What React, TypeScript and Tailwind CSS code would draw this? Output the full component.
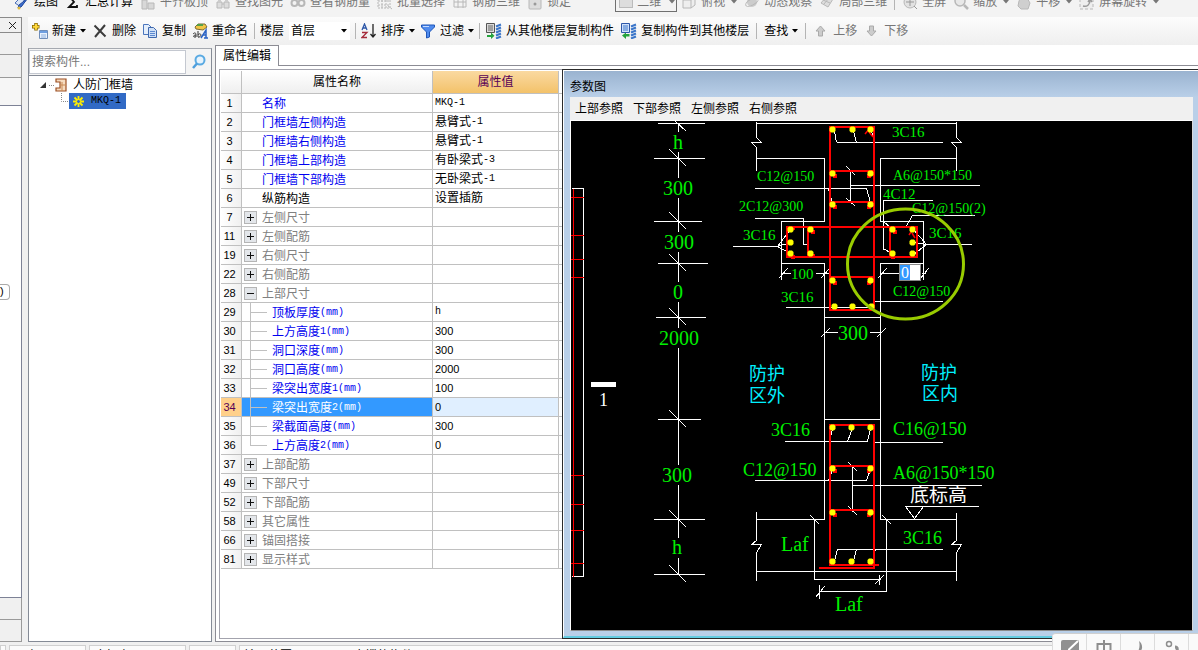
import React from "react";

const CJK = 'font-["Liberation_Sans","Noto_Sans_CJK_SC",sans-serif]';

/* ---------- small helpers ---------- */

function Mixed({ text }: { text: string }) {
  const parts = text.split(/([\x20-\x7e]+)/).filter(Boolean);
  return (
    <span className="flex items-center">
      {parts.map((p, i) =>
        /^[0-9]+$/.test(p) ? (
          <span key={i} className="text-[11px]">{p}</span>
        ) : /^[\x20-\x7e]+$/.test(p) ? (
          <span key={i} className='font-["Liberation_Mono",monospace] text-[10px]'>{p}</span>
        ) : (
          <span key={i}>{p}</span>
        )
      )}
    </span>
  );
}

function Caret() {
  return (
    <svg width="6" height="4" viewBox="0 0 6 4" className="shrink-0">
      <path d="M0 0h6L3 3.5z" fill="currentColor" />
    </svg>
  );
}

function Sep() {
  return <span className="h-4 w-px shrink-0 bg-[#b4b4b4]" />;
}

function Ico({ children }: { children: React.ReactNode }) {
  return (
    <svg width="16" height="16" viewBox="0 0 16 16" className="shrink-0" fill="none">
      {children}
    </svg>
  );
}

type ToolProps = { icon: React.ReactNode; label: string; caret?: boolean; dim?: boolean };

function Tool({ icon, label, caret, dim }: ToolProps) {
  return (
    <button
      type="button"
      className={`flex shrink-0 items-center gap-1 whitespace-nowrap leading-4 ${dim ? "text-[#777]" : "text-black"}`}
    >
      <Ico>{icon}</Ico>
      <span className={dim && caret ? "mr-[2px]" : ""}>{label}</span>
      {caret && <Caret />}
    </button>
  );
}

/* ---------- icons ---------- */

const G = "#b8b8b8";
const icons = {
  draw: (
    <>
      <path d="M1 9l5-5 5 3-4 6z" fill="#dbe6f7" stroke="#4a6db5" />
      <path d="M14 4l-7 9-3 1 1-3z" fill="#3d6fd1" stroke="#234a9c" />
      <circle cx="5" cy="14" r="1.5" fill="#e0b93a" />
    </>
  ),
  sum: <path d="M12 4V2H4l5 6-5 5h8v-2" stroke="#111" strokeWidth="1.8" />,
  align: (
    <>
      <path d="M2 6h5v9H2zM8 9h6v6H8z" fill="#d8d8d8" stroke={G} />
      <path d="M3 3h10" stroke={G} />
    </>
  ),
  find: (
    <>
      <path d="M2 8h5v6H2zM9 8h5v6H9zM7 10h2" fill="#ddd" stroke={G} />
      <path d="M3 4h3v4H3zM10 4h3v4h-3z" fill="#ccc" />
    </>
  ),
  view: (
    <>
      <circle cx="4.500" cy="9" r="3" stroke={G} strokeWidth="2" />
      <circle cx="11.500" cy="9" r="3" stroke={G} strokeWidth="2" />
    </>
  ),
  batch: <path d="M1 3h12v11H1zM1 7h12M1 11h12M5 3v11M9 3v11M11 12l4 3" stroke={G} strokeDasharray="2 1" />,
  grid: <path d="M2 4h12v9H2zM2 8h12M6 3v11M11 3v11" stroke={G} />,
  lock: (
    <>
      <rect x="2" y="5" width="12" height="10" rx="1" fill="#ddd" stroke={G} />
      <path d="M5 5V3a3 3 0 016 0v2" stroke={G} />
      <circle cx="8" cy="10" r="1.500" fill="#999" />
    </>
  ),
  cube: <path d="M2 6l4-3h8v8l-4 3H2zM2 6h8v8M10 6l4-3" fill="#eee" stroke={G} />,
  orbit: (
    <>
      <circle cx="8" cy="8" r="5" fill="#ccc" />
      <ellipse cx="8" cy="8" rx="7" ry="3" stroke={G} transform="rotate(-30 8 8)" />
    </>
  ),
  part3d: <path d="M2 9l5-6 7 2-5 8zM5 10l5-6M4 6l7 3" fill="#ddd" stroke={G} />,
  full: (
    <>
      <circle cx="8" cy="8" r="6" fill="#e2e2e2" stroke={G} />
      <path d="M8 4v8M4 8h8M12 12l3 3" stroke="#999" />
    </>
  ),
  zoom: (
    <>
      <circle cx="7" cy="7" r="5" fill="#e8e8e8" stroke={G} strokeWidth="1.5" />
      <path d="M11 11l4 4" stroke={G} strokeWidth="2.5" />
    </>
  ),
  pan: <path d="M3 7l2-4 6 1 3 5-2 6H5l-3-3z" fill="#cfcfcf" stroke={G} />,
  rotate: (
    <>
      <path d="M1 3h13v12H1z" fill="#eee" stroke={G} strokeDasharray="3 2" />
      <path d="M4 12c4 1 7-1 7-6M9 8l2-3 2 3" stroke="#999" strokeWidth="1.5" />
    </>
  ),
  create: (
    <>
      <path d="M7.500 7.500h8v8h-8z" fill="#e8f1fd" stroke="#6f8db8" />
      <path d="M8 8h7v2H8z" fill="#6f9fe0" />
      <path d="M9 12h5M9 14h5" stroke="#8fb0dd" />
      <path d="M4 0v7.500M0 3.800h7.500" stroke="#8a6a00" strokeWidth="3.500" />
      <path d="M4 .8v6M.8 3.800h6" stroke="#ffd83a" strokeWidth="2" />
    </>
  ),
  del: <path d="M2.500 2.500l11 11M13 2L3 14" stroke="#3c3c3c" strokeWidth="2" />,
  copy: (
    <>
      <path d="M1.500 1.500h5l3 3v7h-8z" fill="#e4eefb" stroke="#4b76bd" />
      <path d="M6.500 4.500h5l3 3v7h-8z" fill="#cfe0f7" stroke="#3f68ad" />
      <path d="M8 8.500h5M8 10.500h5M8 12.500h5" stroke="#5d8ad0" />
    </>
  ),
  rename: (
    <>
      <path d="M3 4l3-3h7l2 3-4 3-7-1z" fill="#f1c544" stroke="#7d6b35" />
      <path d="M5 2h6" stroke="#55a04a" strokeWidth="2" />
      <path d="M1 11c2-2 3-1 3 1v2H2c-1-1 0-2 2-2M6 8v6M6 12c1-2 3-1 3 0s-2 3-3 2" stroke="#333" />
      <path d="M9 15l5-8v8M11 12h3M12 15h4" stroke="#2a62c4" strokeWidth="1.500" />
    </>
  ),
  sort: (
    <>
      <path d="M1 7l2.500-6L6 7M2 5h3" stroke="#2d57a8" strokeWidth="1.300" />
      <path d="M1 9.500h5l-5 5h5" stroke="#a52a3a" strokeWidth="1.300" />
      <path d="M12 1v12M9.500 11l2.500 3 2.500-3" stroke="#222" strokeWidth="1.300" />
    </>
  ),
  filter: (
    <>
      <path d="M1.500 2h13v2L9.500 9v5l-3 1V9l-5-5z" fill="#4f8bee" stroke="#1f56b8" />
      <path d="M3 3.500h6" stroke="#c6dcff" />
    </>
  ),
  floorFrom: (
    <>
      <path d="M.5.500h8v9h-8z" fill="#d9d9d9" stroke="#555" />
      <path d="M2 3h5M2 5h5M2 7h5" stroke="#666" />
      <path d="M1 12h4v-2.500l3.500 3.300L5 16v-2H1z" fill="#25a33c" />
      <path d="M10 3.500l5-2M10 6.500l5-2M10 9.500l5-2M10 12.500l5-2M10 15.500l5-2" stroke="#3c76c9" strokeWidth="2" />
    </>
  ),
  floorTo: (
    <>
      <path d="M.5.500h8v9h-8z" fill="#cfe0fa" stroke="#2d57a8" />
      <path d="M2 3h5M2 5h5M2 7h5" stroke="#3c76c9" />
      <path d="M8.500 13.500H5V16l-4-3.500L5 9.500V11h3.500z" fill="#25a33c" />
      <path d="M10 3.500l5-2M10 6.500l5-2M10 9.500l5-2M10 12.500l5-2M10 15.500l5-2" stroke="#3c76c9" strokeWidth="2" />
    </>
  ),
  up: <path d="M7.500 3L12 8H9.500v5h-4V8H3z" fill="#ccc" stroke="#aaa" />,
  down: <path d="M7.500 13L3 8h2.500V3h4v5H12z" fill="#ccc" stroke="#aaa" />,
};

/* ---------- top bars ---------- */

function ViewBar() {
  return (
    <div className="flex h-[17px] shrink-0 items-end overflow-hidden bg-[#f3f3f3]">
      <div className="flex h-[30px] shrink-0 items-center gap-[7px] pl-[14px]">
        <Tool icon={icons.draw} label="绘图" />
        <Tool icon={icons.sum} label="汇总计算" />
        <Tool icon={icons.align} label="平齐板顶" dim />
        <Tool icon={icons.find} label="查找图元" dim />
        <Tool icon={icons.view} label="查看钢筋量" dim />
        <Tool icon={icons.batch} label="批量选择" dim />
        <Tool icon={icons.grid} label="钢筋三维" dim />
        <Tool icon={icons.lock} label="锁定" dim />
      </div>
      <div className="flex h-[30px] shrink-0 items-center gap-1 pl-11">
        <button type="button" className="flex h-5 w-[62px] shrink-0 items-center gap-1 border border-[#707070] pl-[3px] text-[#777]">
          <svg width="14" height="12" className="shrink-0">
            <rect x="0.5" y="0.5" width="13" height="11" fill="#ddd" stroke="#bbb" />
          </svg>
          <span className="mr-1">二维</span>
          <Caret />
        </button>
        <div className="flex shrink-0 items-center gap-[7px]">
          <Tool icon={icons.cube} label="俯视" caret dim />
          <Tool icon={icons.orbit} label="动态观察" dim />
          <Tool icon={icons.part3d} label="局部三维" dim />
          <Sep />
          <Tool icon={icons.full} label="全屏" dim />
          <Tool icon={icons.zoom} label="缩放" caret dim />
          <Tool icon={icons.pan} label="平移" caret dim />
          <Tool icon={icons.rotate} label="屏幕旋转" caret dim />
        </div>
      </div>
    </div>
  );
}

function EditBar() {
  return (
    <div className="flex h-7 shrink-0 items-center gap-[6px] overflow-hidden bg-gradient-to-b from-[#fcfcfc] to-[#efefef] pl-1">
      <div className="flex shrink-0 items-center gap-[6px]">
        <Tool icon={icons.create} label="新建" caret />
        <Tool icon={icons.del} label="删除" />
        <Tool icon={icons.copy} label="复制" />
        <Tool icon={icons.rename} label="重命名" />
      </div>
      <div className="flex shrink-0 items-center gap-[5px]">
        <Sep />
        <label htmlFor="floor" className="shrink-0">楼层</label>
        <div className="relative flex shrink-0 items-center">
          <select id="floor" defaultValue="首层" className="h-[18px] w-[61px] appearance-none bg-white pl-[2px] text-xs leading-4 text-black outline-none">
            <option>首层</option>
          </select>
          <span className="pointer-events-none absolute right-[3px]">
            <Caret />
          </span>
        </div>
        <Sep />
        <Tool icon={icons.sort} label="排序" caret />
        <Tool icon={icons.filter} label="过滤" caret />
        <Sep />
      </div>
      <div className="flex shrink-0 items-center gap-[7px]">
        <Tool icon={icons.floorFrom} label="从其他楼层复制构件" />
        <Tool icon={icons.floorTo} label="复制构件到其他楼层" />
        <Sep />
        <button type="button" className="flex shrink-0 items-center gap-1">
          <span>查找</span>
          <Caret />
        </button>
        <Sep />
        <Tool icon={icons.up} label="上移" dim />
        <Tool icon={icons.down} label="下移" dim />
      </div>
    </div>
  );
}

/* ---------- left side ---------- */

function Dock() {
  const cell = "border-b border-r border-[#9a9a9a] bg-[#f0f0f0]";
  return (
    <aside className="flex w-[22px] shrink-0 flex-col">
      <div className="flex h-4 items-center justify-end border border-l-0 border-[#8a8a8a] pr-1">
        <button type="button" aria-label="关闭">
          <svg width="9" height="9" viewBox="0 0 9 9">
            <path d="M1 1l7 7M8 1L1 8" stroke="#222" />
          </svg>
        </button>
      </div>
      <div className={`h-[22px] ${cell}`} />
      <div className={`h-[23px] ${cell}`} />
      <div className="h-[27px] border-r border-[#9a9a9a] bg-[#f6f6f6]" />
      <div className="flex flex-1 items-center border border-l-0 border-[#7d8296] bg-white">
        <div className="mb-[120px] h-4 w-[10px] rounded-r border border-l-0 border-[#aaa] text-[11px] leading-3">)</div>
      </div>
      <div className={`h-[22px] ${cell}`} />
      <div className={`h-[22px] ${cell}`} />
    </aside>
  );
}

function ComponentTree() {
  return (
    <section className="flex w-[184px] shrink-0 flex-col border border-[#858b96] border-t-[#a5a9b0] bg-white">
      <form className="flex h-[27px] items-center gap-[5px] border-b border-[#858b96] bg-[#f4f4f4] pr-1" onSubmit={(e) => e.preventDefault()}>
        <input
          aria-label="搜索构件"
          placeholder="搜索构件..."
          className="h-6 min-w-0 flex-1 border border-[#c4c8d0] bg-white pb-px pl-[2px] text-xs outline-none placeholder:text-[#777]"
        />
        <button type="submit" aria-label="搜索">
          <svg width="16" height="16" viewBox="0 0 16 16" fill="none">
            <circle cx="9" cy="6" r="4.5" fill="#e6f3fd" stroke="#5aaae2" strokeWidth="2" />
            <path d="M6 9.500L2 14" stroke="#4f9fdd" strokeWidth="2.500" />
          </svg>
        </button>
      </form>
      <ul className="flex-1 pt-px">
        <li>
          <div className="flex h-4 items-center gap-[6px] pl-[10px]">
            <svg width="28" height="16" viewBox="0 0 28 16" fill="none">
              <path d="M7 5v6H1z" fill="#333" />
              <path d="M10 8.500h6" stroke="#888" strokeDasharray="1 1" />
              <path d="M17 2h10v12H17v-3h4V5h-4z" fill="#f6dcc0" stroke="#9c4f22" strokeWidth="1.200" />
              <path d="M21 8h6M23 5v9" stroke="#c98a55" />
            </svg>
            <span className="text-xs leading-4">人防门框墙</span>
          </div>
          <ul>
            <li className="flex h-4 items-center pl-8">
              <svg width="8" height="16" viewBox="0 0 8 16" fill="none" className="shrink-0">
                <path d="M0.500 0v8.500H8" stroke="#888" strokeDasharray="1 1" />
              </svg>
              <div className="flex h-4 w-[57px] items-center gap-[7px] bg-[#316ac5] pl-1">
                <svg width="11" height="11" viewBox="0 0 11 11" fill="none" className="shrink-0">
                  <path d="M5.500 0v11M0 5.500h11M1.500 1.500l8 8M9.500 1.500l-8 8" stroke="#ffee00" strokeWidth="1.800" />
                  <circle cx="5.500" cy="5.500" r="2" fill="#316ac5" stroke="#ffee00" />
                </svg>
                <span className='font-["Liberation_Mono",monospace] text-[10px] leading-4 text-black'>MKQ-1</span>
              </div>
            </li>
          </ul>
        </li>
      </ul>
    </section>
  );
}

/* ---------- property table ---------- */

type Kind = "attr" | "plain" | "group" | "open" | "child" | "last";
type Row = { no: number; name: string; value?: string; kind: Kind; active?: boolean };

const rows: Row[] = [
  { no: 1, name: "名称", value: "MKQ-1", kind: "attr" },
  { no: 2, name: "门框墙左侧构造", value: "悬臂式-1", kind: "attr" },
  { no: 3, name: "门框墙右侧构造", value: "悬臂式-1", kind: "attr" },
  { no: 4, name: "门框墙上部构造", value: "有卧梁式-3", kind: "attr" },
  { no: 5, name: "门框墙下部构造", value: "无卧梁式-1", kind: "attr" },
  { no: 6, name: "纵筋构造", value: "设置插筋", kind: "plain" },
  { no: 7, name: "左侧尺寸", kind: "group" },
  { no: 11, name: "左侧配筋", kind: "group" },
  { no: 19, name: "右侧尺寸", kind: "group" },
  { no: 22, name: "右侧配筋", kind: "group" },
  { no: 28, name: "上部尺寸", kind: "open" },
  { no: 29, name: "顶板厚度(mm)", value: "h", kind: "child" },
  { no: 30, name: "上方高度1(mm)", value: "300", kind: "child" },
  { no: 31, name: "洞口深度(mm)", value: "300", kind: "child" },
  { no: 32, name: "洞口高度(mm)", value: "2000", kind: "child" },
  { no: 33, name: "梁突出宽度1(mm)", value: "100", kind: "child" },
  { no: 34, name: "梁突出宽度2(mm)", value: "0", kind: "child", active: true },
  { no: 35, name: "梁截面高度(mm)", value: "300", kind: "child" },
  { no: 36, name: "上方高度2(mm)", value: "0", kind: "last" },
  { no: 37, name: "上部配筋", kind: "group" },
  { no: 49, name: "下部尺寸", kind: "group" },
  { no: 52, name: "下部配筋", kind: "group" },
  { no: 58, name: "其它属性", kind: "group" },
  { no: 66, name: "锚固搭接", kind: "group" },
  { no: 81, name: "显示样式", kind: "group" },
];

function NameCell({ row }: { row: Row }) {
  const { kind, name, active } = row;
  if (kind === "group" || kind === "open") {
    return (
      <div className="flex h-[18px] items-center gap-[5px] pl-[2px] text-[#808080]">
        <button type="button" aria-label={name} className="h-[13px] w-[13px] shrink-0 border border-[#b5b5b5] bg-[#e3e6ea]">
          <svg width="11" height="11" viewBox="0 0 11 11">
            <path d={kind === "open" ? "M2 5.500h7" : "M2 5.500h7M5.500 2v7"} stroke="#111" />
          </svg>
        </button>
        <span className="pt-[2px]">{name}</span>
      </div>
    );
  }
  if (kind === "child" || kind === "last") {
    return (
      <div className={`flex h-[18px] items-center gap-[5px] pl-2 ${active ? "text-white" : "text-[#0000f0]"}`}>
        <span className="flex w-[17px] shrink-0 flex-col self-stretch">
          <span className="h-[10px] border-b border-l border-[#c0c0c0]" />
          <span className={kind === "last" ? "flex-1" : "-mb-px flex-1 border-l border-[#c0c0c0]"} />
        </span>
        <span className="pt-[2px]"><Mixed text={name} /></span>
      </div>
    );
  }
  return (
    <div className={`flex h-[18px] items-center pl-5 pt-[2px] ${kind === "attr" ? "text-[#0000f0]" : "text-black"}`}>{name}</div>
  );
}

function PropertyTable() {
  const line = "border-b border-r border-[#c0c0c0] p-0";
  return (
    <div className="w-[343px] shrink-0 border border-r-0 border-[#a3a3ad] bg-white pl-px pt-px">
      <table className="w-full table-fixed border-separate border-spacing-0 text-xs leading-[18px]">
        <colgroup>
          <col className="w-[21px]" />
          <col className="w-[191px]" />
          <col className="w-[126px]" />
          <col />
        </colgroup>
        <thead>
          <tr>
            <th className={`h-[23px] bg-gradient-to-b from-white to-[#efefef] ${line}`} />
            <th className={`bg-gradient-to-b from-white to-[#efefef] font-normal ${line}`}>属性名称</th>
            <th className={`bg-gradient-to-b from-[#fad9a0] to-[#f3c269] font-normal text-[#560056] ${line}`}>属性值</th>
            <th className="border-b border-[#c0c0c0] p-0" />
          </tr>
        </thead>
        <tbody>
          {rows.map((r) => (
            <tr key={r.no}>
              <td
                className={`h-[19px] pr-[3px] text-center text-[11px] ${line} ${
                  r.active ? "bg-[#ffd08a] text-[#560056]" : "bg-gradient-to-r from-white to-[#f0f0f0]"
                }`}
              >
                {r.no}
              </td>
              <td className={`${line} ${r.active ? "bg-[#3399ff]" : ""}`}>
                <NameCell row={r} />
              </td>
              <td className={line + (r.active ? " bg-[#e0efff]" : "")}>
                <div className="flex h-[18px] items-center pl-[2px]">
                  <Mixed text={r.value ?? ""} />
                </div>
              </td>
              <td className="border-b border-[#c0c0c0] p-0" />
            </tr>
          ))}
        </tbody>
      </table>
    </div>
  );
}

/* ---------- section drawing ---------- */

const whiteLines = [
  // elevation dimension chain
  "M657 123H704M653 158H704M653 221H701M657 263H707M655 317H705M657 419H700M653 519H704M653 574H704",
  "M678 123V131M678 151V177M678 197V231M678 251V281M678 301V327M678 347V464M678 484V537M678 557V574",
  // upper wall outline
  "M756 123H956M756 158H824V221H781V263H824V519H756M956 158H880V221H923V263H880V519H956",
  "M824 317H880M824 419H880",
  // lower slab and anchorage
  "M756 571H956M814 519V579H880M879 574V584M886 519V591H819M819 584V598",
  // leaders
  "M836 142H942M754 188H866M850 170V202M850 185H979M932 200H883V249M912 215H974M754 218H803V244H808M732 246H777M925 244H971",
  "M781 263V279M781 273H790M815 273H829M880 273H900M923 263V279M921 273H925M785 307H872M874 301H942",
  "M824 332H837M869 332H880M784 441H867M874 442H942M754 480H866M852 466V511M852 485H981M904 506H978M836 549H942",
  // side section
  "M571 188H583V576H571",
];

const whiteDiagonals = [
  "M675 121L686 131M669 149L686 166M669 212L686 229M669 254L686 271M669 308L686 325M669 410L686 427M669 510L686 527M669 565L686 582",
  "M756 121V137L761 142H751L756 147V170M956 121V137L961 142H951L956 147V170",
  "M756 511V540L751 544H761L756 552V580M956 512V540L951 544H961L956 552V580",
  "M834 131L836 142M853 131L856 142M871 131L874 142M828 188L832 204M866 188L870 202",
  "M846 166L855 175M846 198L855 206M883 221L891 228M883 248L891 253M912 215L905 227",
  "M777 246L790 229M777 246L790 242M777 246L790 253M926 244L913 229M926 244L913 242M926 244L913 254",
  "M778 278L787 268M820 278L829 268M877 278L886 268M919 279L928 268M820 337L829 328M876 337L885 328",
  "M829 441L832 428M847 441L852 428M867 441L870 428M828 480L832 469M866 480L870 469M848 462L857 471M848 506L857 515",
  "M905 506L914 518L923 506M810 515L819 524M882 515L891 524M874 584L883 575M815 597L824 586",
  "M834 560L837 549M853 560L856 549M872 560L875 549",
];

const dots: [number, number][] = [
  [832, 129], [852, 129], [870, 129], [832, 173], [870, 173], [832, 204], [870, 204],
  [790, 229], [790, 242], [790, 253], [810, 229], [810, 253],
  [892, 229], [892, 253], [912, 229], [912, 242], [912, 253],
  [832, 280], [870, 280], [834, 306], [852, 306], [871, 306],
  [832, 427], [851, 427], [870, 427], [832, 468], [870, 468], [832, 512], [870, 512],
  [832, 561], [851, 561], [870, 561],
];

const hooks: [number, number][] = [
  [834, 175], [868, 175], [834, 206], [868, 206], [812, 231], [812, 255], [894, 231], [892, 256],
  [834, 282], [868, 282], [834, 470], [868, 470], [834, 514], [868, 514], [792, 256], [792, 227],
];

type Label = [number, number, string];
const rebarLabels: Label[] = [
  [757, 181, "C12@150"], [893, 180, "A6@150*150"], [912, 213, "C12@150(2)"], [739, 211, "2C12@300"], [893, 296, "C12@150"],
];
const barLabels: Label[] = [
  [892, 137, "3C16"], [883, 199, "4C12"], [743, 240, "3C16"], [929, 238, "3C16"], [781, 302, "3C16"], [791, 279, "100"],
];
const bigLabels: Label[] = [
  [771, 436, "3C16"], [893, 435, "C16@150"], [743, 476, "C12@150"], [893, 479, "A6@150*150"], [903, 544, "3C16"],
];
const dimLabels: Label[] = [
  [673, 149, "h"], [663, 195, "300"], [664, 249, "300"], [673, 299, "0"], [659, 345, "2000"], [662, 482, "300"],
  [672, 554, "h"], [838, 340, "300"], [781, 551, "Laf"], [835, 611, "Laf"],
];
const zoneLabels: Label[] = [
  [749, 380, "防护"], [749, 402, "区外"], [921, 379, "防护"], [922, 400, "区内"],
];

function Labels({ items, className }: { items: Label[]; className: string }) {
  return (
    <g className={className}>
      {items.map(([x, y, t]) => (
        <text key={`${x}-${y}`} x={x} y={y}>{t}</text>
      ))}
    </g>
  );
}

function SectionDrawing() {
  return (
    <svg width="621" height="509" viewBox="571 121 621 509" className="block shrink-0" fill="none" role="img" aria-label="参数图">
      <g transform="translate(.5 .5)" stroke="#fff" shapeRendering="crispEdges">
        {whiteLines.map((d) => <path key={d} d={d} />)}
        {whiteDiagonals.map((d) => <path key={d} d={d} />)}
      </g>
      <rect x="591" y="382" width="25" height="5" fill="#fff" />
      <g stroke="#f00" shapeRendering="crispEdges">
        <path d="M573.500 189V577M571 197.500H584M571 235.500H584M571 259.500H584M571 277.500H584M571 475.500H584M571 504.500H584M571 530.500H584M571 563.500H584" />
        <g strokeWidth="2">
          <path d="M830 127H874V310H830zM830 171H874M830 202H874M830 277H874" />
          <path d="M787 227H917V257H787zM808 227V257M890 227V257" />
          <path d="M830 425H874V565H830zM830 466H874M830 510H874M819 568H875M830 565H879M874 565V568" />
        </g>
      </g>
      <path d="M865 134l5-6M869 132l4 5M909 235l4-6M912 233l3 5" stroke="#f00" strokeWidth="1.500" />
      {hooks.map(([x, y]) => (
        <rect key={`${x}-${y}`} x={x - 1} y={y - 1} width="4" height="4" fill="#f00" />
      ))}
      {dots.map(([x, y]) => (
        <path key={`${x}-${y}`} transform={`translate(${x + 0.5} ${y + 0.5})`} d="M-1.500-3h3L3-1.500v3L1.500 3h-3L-3 1.500v-3z" fill="#ff0" />
      ))}
      <Labels items={rebarLabels} className='fill-[#00f000] font-["Liberation_Serif",serif] text-[14px]' />
      <Labels items={barLabels} className='fill-[#00f000] font-["Liberation_Serif",serif] text-[15px]' />
      <Labels items={bigLabels} className='fill-[#00f000] font-["Liberation_Serif",serif] text-[18px]' />
      <Labels items={dimLabels} className='fill-[#00f000] font-["Liberation_Serif",serif] text-[20px]' />
      <Labels items={zoneLabels} className='fill-[#00f0ff] font-["Noto_Sans_CJK_SC",sans-serif] text-[18px]' />
      <text x="910" y="502" className='fill-white font-["Noto_Sans_CJK_SC",sans-serif] text-[19px]'>底标高</text>
      <text x="599" y="406" className='fill-white font-["Liberation_Serif",serif] text-[18px]'>1</text>
      <foreignObject x="899" y="264" width="22" height="17">
        <input
          aria-label="梁突出宽度2"
          defaultValue="0"
          className='block h-[17px] w-[22px] border border-[#888] bg-[linear-gradient(to_right,#3399ff_50%,#fff_50%)] pl-px font-["Liberation_Serif",serif] text-[16px] leading-[15px] text-white outline-none'
        />
      </foreignObject>
      <ellipse cx="905.500" cy="264" rx="58" ry="55" stroke="#99cc00" strokeWidth="3" />
    </svg>
  );
}

function DiagramWindow() {
  return (
    <section className="flex min-w-0 flex-1 flex-col border-b border-l border-t border-[#2b2b2b] bg-[#b9cfe8]">
      <div className="flex min-h-0 flex-1 flex-col border-b-2 border-l border-t border-b-[#63cbe0] border-l-white border-t-white pb-[5px] pl-[6px] pr-[5px]">
        <header className="-ml-[6px] -mr-[5px] flex h-[26px] shrink-0 items-center bg-gradient-to-b from-[#9ab3d0] to-[#b9cfe8] pl-[6px] pt-[6px]">
          <h2 className="text-xs font-normal leading-4">参数图</h2>
        </header>
        <nav className="flex h-[23px] shrink-0 items-center gap-[10px] bg-[#f0f0f0] pl-[5px]">
          {["上部参照", "下部参照", "左侧参照", "右侧参照"].map((t) => (
            <button key={t} type="button" className="leading-4">{t}</button>
          ))}
        </nav>
        <div className="flex min-h-0 flex-1 overflow-hidden border border-b-[#8a8a8a] border-l-white border-r-[#d8d8d8] border-t-white bg-black">
          <SectionDrawing />
        </div>
      </div>
    </section>
  );
}

/* ---------- bottom ---------- */

function StatusBar() {
  const box = "shrink-0 overflow-hidden whitespace-nowrap border border-[#d0d0d0] bg-[#fbfbfb] pl-1 pt-[2px]";
  return (
    <footer className="flex h-[8px] shrink-0 items-start gap-[3px] overflow-hidden pt-[3px]">
      <div className={`h-6 w-[5px] ${box}`} />
      <div className={`h-6 w-[77px] ${box}`}>层高：3</div>
      <div className={`h-6 w-[97px] ${box}`}>底标高：0</div>
      <div className={`h-6 w-[47px] ${box}`} />
      <div className={`h-6 flex-1 ${box}`}>输入范围：0-1000，支撑的构件</div>
    </footer>
  );
}

function InputMethodBar() {
  const cell = "flex h-4 w-[34px] shrink-0 items-start justify-center border-l border-[#dcdcdc] pt-[6px]";
  return (
    <div className="absolute bottom-0 right-0 flex w-[146px] overflow-hidden rounded-tl border-t border-[#cfcfcf] bg-[#fafafa] text-[#8e8e8e]">
      <button type="button" aria-label="输入法" className={cell}>
        <svg width="18" height="14" viewBox="0 0 18 14">
          <rect width="18" height="14" rx="2" fill="#909090" />
          <path d="M17 1L8 9.500V13" stroke="#fff" strokeWidth="2" fill="none" />
        </svg>
      </button>
      <button type="button" aria-label="中文" className={cell}>
        <svg width="16" height="14" viewBox="0 0 16 14" fill="none">
          <path d="M1.500 11V4h13v7M8 0v14" stroke="#8e8e8e" strokeWidth="2" />
        </svg>
      </button>
      <button type="button" aria-label="半角" className={cell}>
        <svg width="14" height="14" viewBox="0 0 14 14">
          <path d="M8 1c5 4 4 11-3 13 4-4 4-9 3-13z" fill="#8e8e8e" />
        </svg>
      </button>
      <button type="button" aria-label="标点" className={cell}>
        <svg width="14" height="14" viewBox="0 0 14 14" fill="none">
          <circle cx="4" cy="4" r="2.500" stroke="#8e8e8e" strokeWidth="1.500" />
          <path d="M10 7c3 0 3 4 0 6" stroke="#8e8e8e" strokeWidth="3" />
        </svg>
      </button>
      <button type="button" aria-label="键盘" className={cell} />
    </div>
  );
}

export default function App() {
  return (
    <div className={`relative flex h-screen flex-col overflow-hidden bg-[#f0f0f0] text-xs text-black ${CJK}`}>
      <ViewBar />
      <div className="flex min-h-0 flex-1">
        <Dock />
        <div className="ml-[6px] flex min-w-0 flex-1 flex-col">
          <EditBar />
          <main className="flex min-h-0 flex-1 gap-[3px]">
            <div className="flex pt-[3px]">
              <ComponentTree />
            </div>
            <div className="flex min-w-0 flex-1 flex-col">
              <div role="tablist" className="flex h-[21px] shrink-0 bg-white">
                <button role="tab" aria-selected="true" type="button" className="w-16 shrink-0 border border-b-0 border-[#8c8c94]">
                  属性编辑
                </button>
                <div className="flex-1 border-b border-[#8c8c94]" />
              </div>
              <div className="flex min-h-0 flex-1 border-b border-l border-[#8c8c94] bg-white pb-[2px] pl-[3px] pt-[3px]">
                <PropertyTable />
                <DiagramWindow />
              </div>
            </div>
          </main>
        </div>
      </div>
      <StatusBar />
      <InputMethodBar />
    </div>
  );
}
